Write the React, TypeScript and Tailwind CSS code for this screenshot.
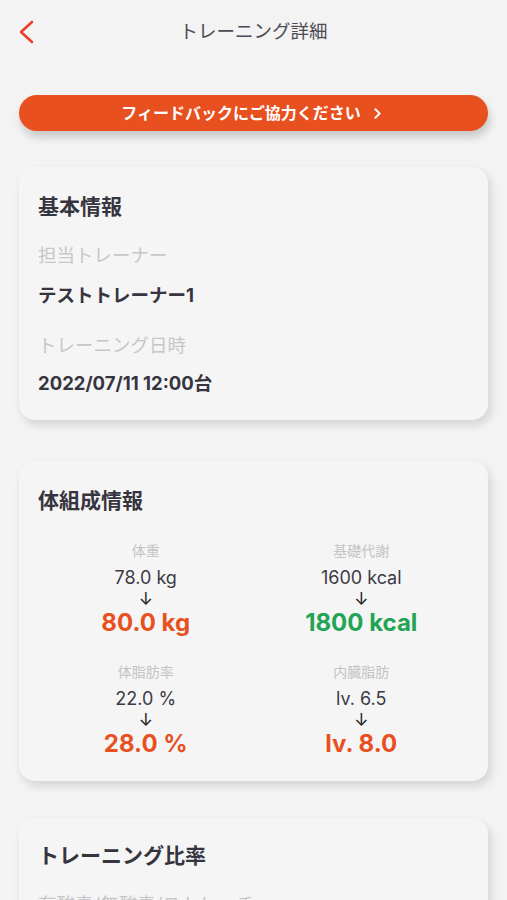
import { ChevronRight } from 'lucide-react';

const font = { fontFamily: 'Inter, "Noto Sans CJK JP", sans-serif' };

type Metric = { label: string; before: string; after: string; color: string };

const metrics: Metric[] = [
  { label: '体重', before: '78.0 kg', after: '80.0 kg', color: 'text-[#e8501f]' },
  { label: '基礎代謝', before: '1600 kcal', after: '1800 kcal', color: 'text-[#22a454]' },
  { label: '体脂肪率', before: '22.0 %', after: '28.0 %', color: 'text-[#e8501f]' },
  { label: '内臓脂肪', before: 'lv. 6.5', after: 'lv. 8.0', color: 'text-[#e8501f]' },
];

function Card({ children, className = '' }: { children: React.ReactNode; className?: string }) {
  return (
    <div
      className={`mx-[19px] rounded-2xl bg-[#f5f5f5] px-[19px] shadow-[3px_5px_10px_rgba(0,0,0,0.13)] ${className}`}
    >
      {children}
    </div>
  );
}

export default function App() {
  return (
    <div className="h-[900px] w-[507px] overflow-hidden bg-[#f3f3f3] text-[#35343f]" style={font}>
      {/* header */}
      <div className="relative flex h-[64px] items-center justify-center">
        <svg className="absolute left-[14px] top-[18px]" width="24" height="28" viewBox="0 0 24 28" fill="none">
          <polyline points="18,4 7,14 18,24" stroke="#e8402c" strokeWidth="2.6" strokeLinecap="round" strokeLinejoin="round" />
        </svg>
        <h1 className="text-[18.5px] text-[#4b4a55]">トレーニング詳細</h1>
      </div>

      <div className="mt-[31px] px-[19px]">
        <button className="flex h-[36px] w-full items-center justify-center gap-1 rounded-full bg-[#e8501f] text-[16px] font-bold text-white shadow-[2px_6px_8px_rgba(0,0,0,0.18)]">
          フィードバックにご協力ください
          <ChevronRight size={17} strokeWidth={2.8} className="ml-1" />
        </button>
      </div>

      <Card className="mt-[36px] pb-[24px] pt-[25px]">
        <h2 className="text-[21px] font-bold leading-[30px]">基本情報</h2>
        <p className="mt-[20px] text-[18.5px] leading-[26px] text-[#c7c7c9]">担当トレーナー</p>
        <p className="mt-[14px] text-[18.5px] font-bold leading-[26px]">テストトレーナー1</p>
        <p className="mt-[24px] text-[18.5px] leading-[26px] text-[#c7c7c9]">トレーニング日時</p>
        <p className="mt-[12px] text-[18.5px] font-bold leading-[26px]">2022/07/11 12:00台</p>
      </Card>

      <Card className="mt-[41px] pb-[22px] pt-[25px]">
        <h2 className="text-[21px] font-bold leading-[30px]">体組成情報</h2>
        <div className="mt-[25px] grid grid-cols-2 gap-y-[24px]">
          {metrics.map((m) => (
            <div key={m.label} className="flex flex-col items-center">
              <span className="text-[14px] leading-[20px] text-[#c4c4c6]">{m.label}</span>
              <span className="mt-[5px] text-[18px] leading-[24px] text-[#3c3b45]">{m.before}</span>
              <span className="text-[17px] leading-[18px] text-[#222]">↓</span>
              <span className={`text-[24px] font-bold leading-[30px] ${m.color}`}>{m.after}</span>
            </div>
          ))}
        </div>
      </Card>

      <Card className="mt-[37px] pb-[20px] pt-[23px]">
        <h2 className="text-[21px] font-bold leading-[30px]">トレーニング比率</h2>
        <p className="mt-[20px] text-[18.5px] leading-[26px] text-[#c7c7c9]">有酸素/無酸素/ストレッチ</p>
      </Card>
    </div>
  );
}
